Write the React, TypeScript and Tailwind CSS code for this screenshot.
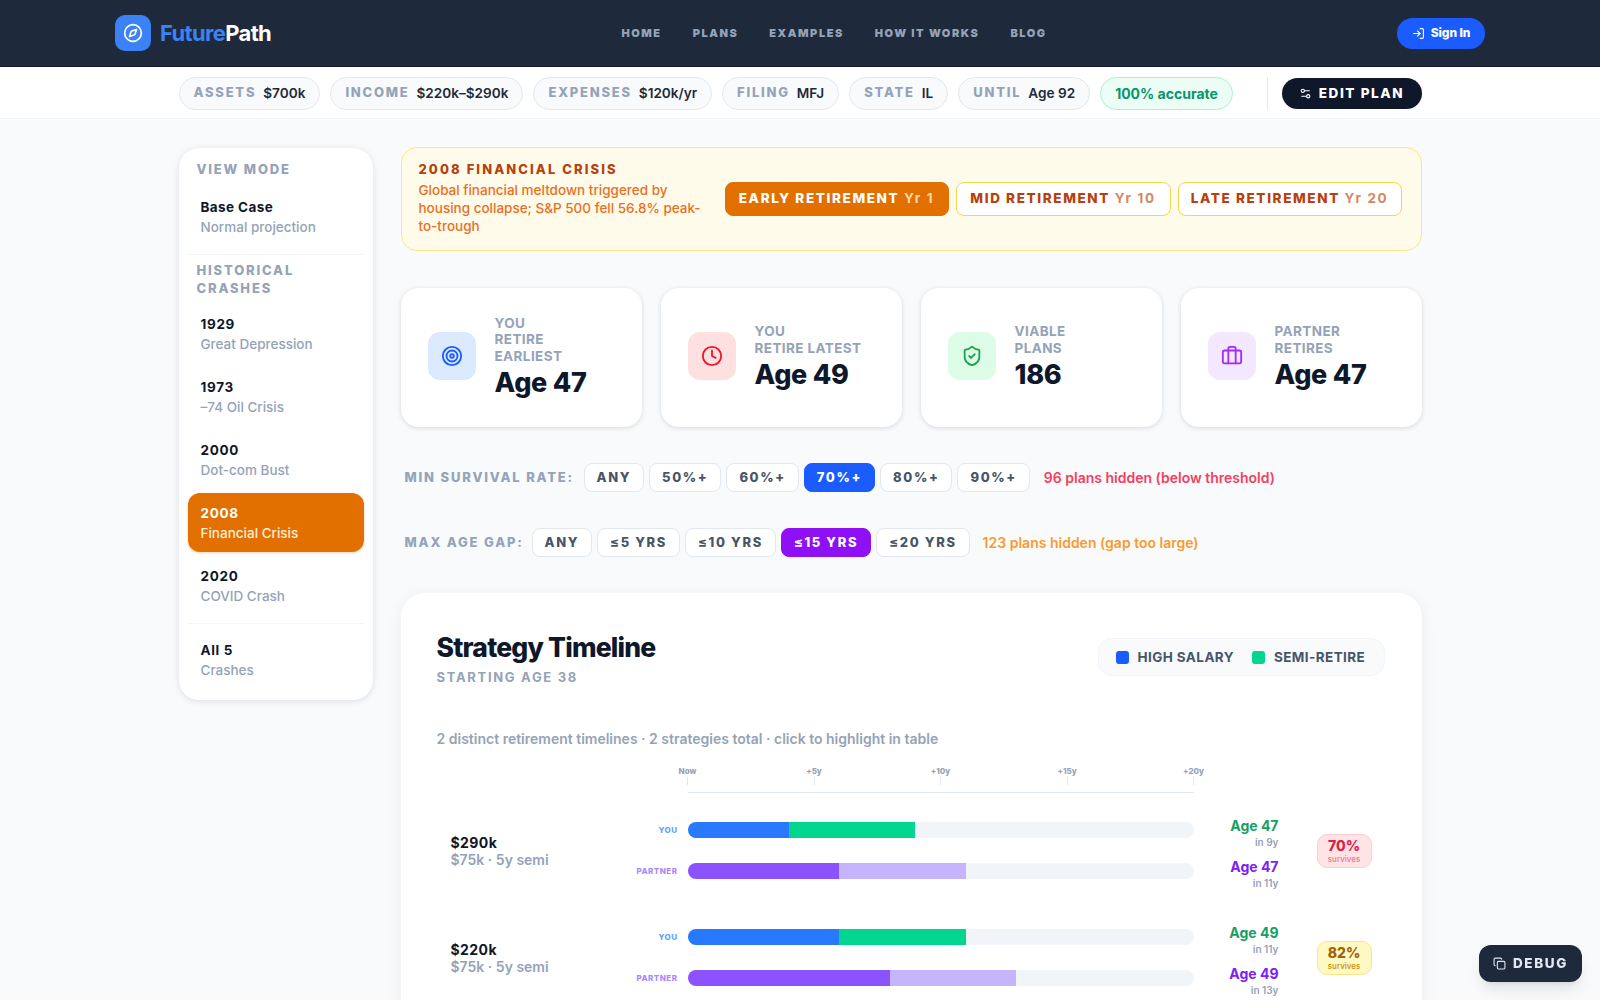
import { Briefcase, Clock, Compass, Copy, LogIn, Settings2, ShieldCheck, Target } from "lucide-react";
import { clsx } from "clsx";

const navLinks = ["Home", "Plans", "Examples", "How it works", "Blog"];

const chips = [
  ["Assets", "$700k"],
  ["Income", "$220k–$290k"],
  ["Expenses", "$120k/yr"],
  ["Filing", "MFJ"],
  ["State", "IL"],
  ["Until", "Age 92"],
];

const crashes = [
  { title: "1929", sub: "Great Depression" },
  { title: "1973", sub: "–74 Oil Crisis" },
  { title: "2000", sub: "Dot-com Bust" },
  { title: "2008", sub: "Financial Crisis", active: true },
  { title: "2020", sub: "COVID Crash" },
];

const phases = [
  { label: "Early Retirement", yr: "Yr 1", active: true, width: "w-[224px]" },
  { label: "Mid Retirement", yr: "Yr 10", width: "w-[215px]" },
  { label: "Late Retirement", yr: "Yr 20", width: "w-[224px]" },
];

const stats = [
  { label: ["You", "Retire", "Earliest"], value: "Age 47", icon: Target, box: "bg-[#dbeafe]", color: "text-[#1a5cff]" },
  { label: ["You", "Retire Latest"], value: "Age 49", icon: Clock, box: "bg-[#ffe0e0]", color: "text-[#e8192c]" },
  { label: ["Viable", "Plans"], value: "186", icon: ShieldCheck, box: "bg-[#dcfce7]", color: "text-[#16a34a]" },
  { label: ["Partner", "Retires"], value: "Age 47", icon: Briefcase, box: "bg-[#f3e8ff]", color: "text-[#a32cf5]" },
];

const ticks = ["Now", "+5y", "+10y", "+15y", "+20y"];

const timelines = [
  {
    salary: "$290k",
    you: { work: "20%", semi: "25%", age: "Age 47", when: "in 9y" },
    partner: { work: "30%", semi: "25%", age: "Age 47", when: "in 11y" },
    rate: "70%",
    badge: "bg-[#ffe4e6] border-[#fecdd3]",
    rateText: "text-[#e11d48]",
    subText: "text-[#fb7185]",
  },
  {
    salary: "$220k",
    you: { work: "30%", semi: "25%", age: "Age 49", when: "in 11y" },
    partner: { work: "40%", semi: "25%", age: "Age 49", when: "in 13y" },
    rate: "82%",
    badge: "bg-[#fef9c3] border-[#fde68a]",
    rateText: "text-[#a16207]",
    subText: "text-[#ca8a04]",
  },
];

function FilterChip({ label, active, activeClass }: { label: string; active?: boolean; activeClass?: string }): React.JSX.Element {
  return (
    <button
      type="button"
      className={clsx(
        "h-[29px] shrink-0 rounded-lg border px-[12px] text-[13px] font-extrabold tracking-[0.125em]",
        active ? activeClass : "border-[#e2e8f0] bg-white text-[#475569]",
      )}
    >
      {label}
    </button>
  );
}

function Lane({ label, labelColor, work, semi, workColor, semiColor }: {
  label: string;
  labelColor: string;
  work: string;
  semi: string;
  workColor: string;
  semiColor: string;
}): React.JSX.Element {
  return (
    <div className="flex h-4 items-center">
      <span className={clsx("w-[58px] text-right text-[8px] font-extrabold tracking-[0.06em] uppercase", labelColor)}>{label}</span>
      <div className="ml-[10px] flex h-4 w-[506px] overflow-hidden rounded-full bg-[#f1f5f9]">
        <div className={workColor} style={{ width: work }} />
        <div className={semiColor} style={{ width: semi }} />
      </div>
    </div>
  );
}

export default function App(): React.JSX.Element {
  return (
    <div className="h-screen overflow-hidden bg-[#f8fafc] font-['Inter',sans-serif] text-[#0f172a]">
      <header className="flex h-[67px] items-center justify-between border-b border-[#0f172a] bg-[#1e293b] px-[115px]">
        <div className="flex items-center gap-[9px]">
          <div className="flex h-9 w-9 items-center justify-center rounded-[10px] bg-[#3b82f6]">
            <Compass className="h-5 w-5 text-white" strokeWidth={2} />
          </div>
          <span className="text-[22px] font-bold tracking-[-0.03em] text-white">
            <span className="text-[#3b82f6]">Future</span>Path
          </span>
        </div>
        <nav className="flex items-center gap-[31px] pt-px">
          {navLinks.map((l) => (
            <a key={l} className="text-[11px] font-black tracking-[0.14em] text-[#94a3b8] uppercase">
              {l}
            </a>
          ))}
        </nav>
        <button type="button" className="flex h-[31px] w-[88px] items-center justify-center gap-[6px] rounded-full bg-[#1a5cff] text-[12px] font-extrabold tracking-[-0.01em] text-white">
          <LogIn className="h-[13px] w-[13px]" strokeWidth={2} />
          Sign In
        </button>
      </header>

      <div className="h-[52px] border-b border-[#f1f5f9] bg-white pt-px">
        <div className="mx-auto flex h-full w-[1243px] items-center justify-between whitespace-nowrap">
          <div className="flex shrink-0 items-center gap-[10px]">
            {chips.map(([k, v]) => (
              <div key={k} className="flex h-[33px] shrink-0 items-center gap-[7px] rounded-full border border-[#e2e8f0] bg-[#f8fafc] px-[14px]">
                <span className="text-[13px] font-extrabold tracking-[0.135em] text-[#94a3b8] uppercase">{k}</span>
                <span className="text-[13.6px] font-semibold text-[#1e293b]">{v}</span>
              </div>
            ))}
            <div className="flex h-[33px] shrink-0 items-center rounded-full border border-[#a7f3d0] bg-[#ecfdf5] px-[14px] text-[14px] font-bold text-[#059669]">
              100% accurate
            </div>
          </div>
          <div className="flex shrink-0 items-center gap-[14px]">
            <div className="h-[33px] w-px bg-[#e2e8f0]" />
            <button type="button" className="flex h-[31px] w-[140px] items-center justify-center gap-[7px] rounded-full bg-[#0f172a] text-[13.5px] font-extrabold tracking-[0.12em] text-white">
              <Settings2 className="h-[13px] w-[13px]" strokeWidth={2} />
              EDIT PLAN
            </button>
          </div>
        </div>
      </div>

      <div className="mx-auto flex w-[1243px] items-start gap-[28px] pt-[28px]">
        <aside className="mt-px w-[194px] shrink-0 rounded-[20px] bg-white px-[9px] pt-[12px] pb-[11px] shadow-[0_1px_6px_rgba(15,23,42,0.12)]">
          <div className="pl-[9px] text-[13px] leading-[18px] font-extrabold tracking-[0.14em] text-[#94a3b8] uppercase">View Mode</div>
          <div className="mt-[9px] flex h-[59px] flex-col justify-center rounded-xl px-[13px]">
            <div className="text-[13.5px] leading-5 font-bold tracking-[0.03em]">Base Case</div>
            <div className="text-[13.5px] leading-5 font-medium text-[#94a3b8]">Normal projection</div>
          </div>
          <div className="mt-[8px] border-t border-[#f1f5f9]" />
          <div className="mt-[6px] pl-[9px] text-[13px] leading-[18px] font-extrabold tracking-[0.14em] text-[#94a3b8] uppercase">
            Historical Crashes
          </div>
          <div className="mt-[7px] flex flex-col gap-[4px]">
            {crashes.map((c) => (
              <div
                key={c.title}
                className={clsx(
                  "flex h-[59px] flex-col justify-center rounded-xl px-[13px]",
                  c.active && "bg-[#e17000] shadow-[0_1px_3px_rgba(225,112,0,0.3)]",
                )}
              >
                <div className={clsx("text-[13.5px] leading-5 font-bold tracking-[0.05em]", c.active && "text-white")}>{c.title}</div>
                <div className={clsx("text-[13.5px] leading-5 font-medium", c.active ? "text-[#ffedd5]" : "text-[#94a3b8]")}>{c.sub}</div>
              </div>
            ))}
          </div>
          <div className="mt-[8px] border-t border-[#f1f5f9]" />
          <div className="mt-[6px] flex h-[59px] flex-col justify-center rounded-xl px-[13px]">
            <div className="text-[13.5px] leading-5 font-bold tracking-[0.05em]">All 5</div>
            <div className="text-[13.5px] leading-5 font-medium text-[#94a3b8]">Crashes</div>
          </div>
        </aside>

        <main className="min-w-0 flex-1">
          <section className="flex h-[104px] items-center justify-between rounded-2xl border border-[#fde68a] bg-[#fffbeb] pr-[19px] pl-[17px]">
            <div className="w-[288px] pb-[3px]">
              <div className="mb-[3px] text-[13px] leading-[18px] font-extrabold tracking-[0.16em] text-[#b7410e] uppercase">2008 Financial Crisis</div>
              <p className="text-[13.5px] leading-[18px] font-medium text-[#e9701f]">
                Global financial meltdown triggered by housing collapse; S&amp;P 500 fell 56.8% peak-to-trough
              </p>
            </div>
            <div className="mb-px flex gap-[7px]">
              {phases.map((p) => (
                <button
                  key={p.label}
                  type="button"
                  className={clsx(
                    "h-[34px] rounded-lg border text-[13.5px] font-extrabold tracking-[0.12em] uppercase",
                    p.width,
                    p.active ? "border-[#e17000] bg-[#e17000] text-white" : "border-[#fcd34d] bg-white text-[#b7410e]",
                  )}
                >
                  {p.label} <span className={clsx("font-bold normal-case", p.active ? "text-[#fed7aa]" : "text-[#d18a63]")}>{p.yr}</span>
                </button>
              ))}
            </div>
          </section>

          <section className="mt-[37px] grid grid-cols-4 gap-[19px]">
            {stats.map((s) => {
              const Icon = s.icon;
              return (
                <div key={s.value + s.label[0]} className="flex h-[139px] items-center gap-[19px] rounded-[18px] bg-white pl-[27px] shadow-[0_1px_5px_rgba(15,23,42,0.14)]">
                  <div className={clsx("mb-[4px] flex h-12 w-12 shrink-0 items-center justify-center rounded-xl", s.box)}>
                    <Icon className={clsx("h-[22px] w-[22px]", s.color)} strokeWidth={2} />
                  </div>
                  <div>
                    <div className="text-[13.5px] leading-[16.5px] font-bold tracking-[0.03em] text-[#94a3b8] uppercase">
                      {s.label.map((t) => (
                        <div key={t}>{t}</div>
                      ))}
                    </div>
                    <div className="mt-[2px] text-[27px] leading-[34px] font-extrabold tracking-[-0.01em]">{s.value}</div>
                  </div>
                </div>
              );
            })}
          </section>

          <div className="mt-[36px] flex items-center pl-[4px]">
            <span className="w-[179px] text-[13px] font-extrabold tracking-[0.14em] text-[#94a3b8] uppercase">Min survival rate:</span>
            <div className="flex gap-[5px]">
              {["ANY", "50%+", "60%+", "70%+", "80%+", "90%+"].map((l) => (
                <FilterChip key={l} label={l} active={l === "70%+"} activeClass="border-[#1a5cff] bg-[#1a5cff] text-white" />
              ))}
            </div>
            <span className="ml-[14px] text-[14px] font-semibold text-[#f43f5e]">96 plans hidden (below threshold)</span>
          </div>

          <div className="mt-[36px] flex items-center pl-[4px]">
            <span className="w-[127px] text-[13px] font-extrabold tracking-[0.14em] text-[#94a3b8] uppercase">Max age gap:</span>
            <div className="flex gap-[5px]">
              {["ANY", "≤5 YRS", "≤10 YRS", "≤15 YRS", "≤20 YRS"].map((l) => (
                <FilterChip key={l} label={l} active={l === "≤15 YRS"} activeClass="border-[#9010f5] bg-[#9010f5] text-white" />
              ))}
            </div>
            <span className="ml-[13px] text-[14px] font-semibold text-[#fb9a2e]">123 plans hidden (gap too large)</span>
          </div>

          <section className="mt-[36px] rounded-[24px] bg-white px-[36px] pt-[37px] pb-[36px] shadow-[0_2px_16px_rgba(15,23,42,0.06)]">
            <div className="flex items-start justify-between">
              <div>
                <h2 className="text-[26.5px] leading-[34px] font-extrabold tracking-[-0.03em]">Strategy Timeline</h2>
                <div className="mt-[4px] text-[13px] leading-[18px] font-bold tracking-[0.13em] text-[#94a3b8] uppercase">Starting age 38</div>
              </div>
              <div className="mt-[8px] mr-px flex h-[38px] w-[287px] items-center gap-[18px] rounded-[14px] border border-[#f1f5f9] bg-[#f8fafc] pl-[17px]">
                <span className="flex items-center gap-[9px] text-[13.5px] font-bold tracking-[0.03em] text-[#475569]">
                  <span className="h-[13px] w-[13px] rounded-[3px] bg-[#1a5cff]" />
                  HIGH SALARY
                </span>
                <span className="flex items-center gap-[9px] text-[13.5px] font-bold tracking-[0.03em] text-[#475569]">
                  <span className="h-[13px] w-[13px] rounded-[3px] bg-[#00d68f]" />
                  SEMI-RETIRE
                </span>
              </div>
            </div>

            <div className="mt-[44px] text-[14px] leading-[18px] font-semibold text-[#94a3b8]">
              2 distinct retirement timelines · 2 strategies total · click to highlight in table
            </div>

            <div className="mt-[17px] ml-[251px] h-[28px] w-[506px] border-b border-[#e2e8f0]">
              <div className="flex justify-between">
                {ticks.map((t) => (
                  <div key={t} className="flex w-0 flex-col items-center">
                    <span className="text-[8px] leading-[12px] font-extrabold whitespace-nowrap text-[#94a3b8]">{t}</span>
                    <span className="h-[8px] w-px bg-[#e2e8f0]" />
                  </div>
                ))}
              </div>
            </div>

            <div className="mt-[25px] flex flex-col gap-[34px]">
              {timelines.map((t) => (
                <div key={t.salary} className="flex h-[73px] items-start pl-[14px]">
                  <div className="h-full w-[169px] shrink-0">
                    <div className="mt-[16px] text-[14px] leading-[17px] font-bold tracking-[0.03em]">{t.salary}</div>
                    <div className="text-[14px] leading-[17px] font-semibold text-[#94a3b8]">$75k · 5y semi</div>
                  </div>
                  <div className="mt-[4px] flex shrink-0 flex-col gap-[25px]">
                    <Lane label="You" labelColor="text-[#60a5fa]" work={t.you.work} semi={t.you.semi} workColor="bg-[#2979ff]" semiColor="bg-[#00d68f]" />
                    <Lane label="Partner" labelColor="text-[#a78bfa]" work={t.partner.work} semi={t.partner.semi} workColor="bg-[#8c52ff]" semiColor="bg-[#c4b5fd]" />
                  </div>
                  <div className="flex w-[85px] shrink-0 flex-col gap-[9px] text-right">
                    {[
                      { d: t.you, c: "text-[#16a065]" },
                      { d: t.partner, c: "text-[#7c22f5]" },
                    ].map(({ d, c }, i) => (
                      <div key={i} className="h-[32px]">
                        <div className={clsx("text-[14px] leading-[16px] font-bold", c)}>{d.age}</div>
                        <div className="text-[10px] leading-[16px] font-semibold text-[#94a3b8]">{d.when}</div>
                      </div>
                    ))}
                  </div>
                  <div className={clsx("mt-[16px] ml-[38px] flex h-[34px] w-[55px] shrink-0 flex-col items-center justify-center rounded-[10px] border", t.badge)}>
                    <span className={clsx("text-[14px] leading-[16px] font-extrabold", t.rateText)}>{t.rate}</span>
                    <span className={clsx("text-[8px] leading-[10px] font-medium", t.subText)}>survives</span>
                  </div>
                </div>
              ))}
            </div>
          </section>
        </main>
      </div>

      <button type="button" className="fixed right-[18px] bottom-[18px] flex h-[37px] w-[103px] items-center justify-center gap-[7px] rounded-[12px] bg-[#1e293b] text-[13.5px] font-extrabold tracking-[0.12em] text-[#e2e8f0] shadow-lg">
        <Copy className="h-[13px] w-[13px]" strokeWidth={2} />
        DEBUG
      </button>
    </div>
  );
}
